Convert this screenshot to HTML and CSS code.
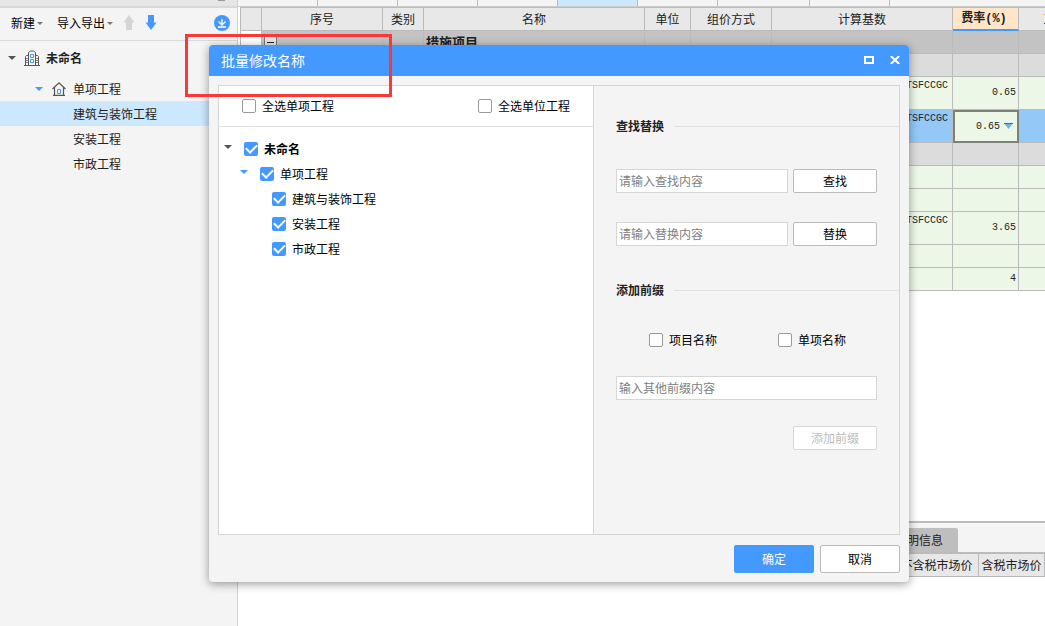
FILE: index.html
```html
<!DOCTYPE html>
<html lang="zh-CN">
<head>
<meta charset="utf-8">
<meta name="viewport" content="width=device-width, initial-scale=1">
<title>批量修改名称</title>
<link rel="stylesheet" href="styles.css">
</head>
<body>
<div class="app">
  <aside class="sidebar">
    <div class="strip strip-side"><i class="strip-nub"></i></div>
    <div class="toolbar">
      <button class="tool">新建<i class="mini-caret"></i></button>
      <button class="tool tool-export">导入导出<i class="mini-caret"></i></button>
      <button class="icon-btn" aria-label="上移" disabled><svg width="12" height="16" viewBox="0 0 12 16"><path d="M6 0l5.500 7.500H9V15H3V7.500H.5z" fill="#d4d4d4"/></svg></button>
      <button class="icon-btn icon-down" aria-label="下移"><svg width="12" height="16" viewBox="0 0 12 16"><path d="M3 0h6v7.500h2.500L6 15 .5 7.500H3z" fill="#49f"/></svg></button>
      <button class="icon-btn icon-load" aria-label="下载"><svg width="16" height="16" viewBox="0 0 16 16"><circle cx="8" cy="8" r="8" fill="#49f"/><path d="M8 4v6M4.500 6.500L8 10l3.500-3.500M4 12h8" fill="none" stroke="#fff" stroke-width="1.300"/></svg></button>
    </div>
    <ul class="nav">
      <li class="nav-row nav-root"><i class="caret"></i>
        <svg class="nav-icon" width="16" height="16" viewBox="0 0 16 16" fill="none" stroke="#555"><path d="M0 15.500h16M1.500 15V6.500l1-1h2M4.500 15V2.500l2-1.500h3l2 1.500V15M11.500 5.500h2l1 1V15"/><path d="M2 8.500h2M2 10.500h2M2 12.500h2M12 8.500h2M12 10.500h2M12 12.500h2" stroke="#888"/><path d="M6.500 4.500h3v3h-3zM6.500 9.500h3v3h-3z" stroke="#49f"/></svg>
        <b>未命名</b></li>
      <li class="nav-row nav-mid"><i class="caret caret-blue"></i>
        <svg class="nav-icon" width="14" height="14" viewBox="0 0 14 14" fill="none" stroke="#555"><path d="M.5 7L7 .9 13.500 7M2.500 5.500v7.500M11.500 5.500v7.500M1 13.400h12" stroke-width="1.200"/><path d="M5.500 7.500h3v4h-3z" stroke="#49f"/></svg>
        <span>单项工程</span></li>
      <li class="nav-row nav-leaf selected">建筑与装饰工程</li>
      <li class="nav-row nav-leaf">安装工程</li>
      <li class="nav-row nav-leaf">市政工程</li>
    </ul>
  </aside>

  <main class="main">
    <div class="strip strip-main"><i></i><i></i><i></i><i></i><i class="on"></i><i></i><i class="wide"></i><i></i></div>
    <div class="sheet">
      <table class="grid">
        <colgroup><col class="c1"><col class="c2"><col class="c3"><col class="c4"><col class="c5"><col class="c6"><col class="c7"><col class="c8"><col class="c9"></colgroup>
        <thead><tr><th></th><th>序号</th><th>类别</th><th>名称</th><th>单位</th><th>组价方式</th><th>计算基数</th><th class="rate">费率(%)</th><th>工程内容</th></tr></thead>
        <tbody>
          <tr class="dark"><td class="blank"></td><td><button class="fold" aria-label="折叠"></button></td><td></td><td class="group">措施项目</td><td></td><td></td><td></td><td></td><td></td></tr>
          <tr class="grey"><td></td><td></td><td></td><td></td><td></td><td></td><td></td><td></td><td></td></tr>
          <tr class="tall"><td></td><td></td><td></td><td></td><td></td><td></td><td class="base">TSFCCGC</td><td class="num">0.65</td><td></td></tr>
          <tr class="tall active"><td></td><td></td><td></td><td></td><td></td><td></td><td class="base">TSFCCGC</td><td class="num edit">0.65<svg class="drop" width="9" height="6" viewBox="0 0 9 6"><path d="M0 0h9L4.500 6z" fill="#6bb4ea"/><path d="M0 .5h9" stroke="#356d9c"/></svg></td><td></td></tr>
          <tr class="grey"><td></td><td></td><td></td><td></td><td></td><td></td><td></td><td></td><td></td></tr>
          <tr><td></td><td></td><td></td><td></td><td></td><td></td><td></td><td></td><td></td></tr>
          <tr><td></td><td></td><td></td><td></td><td></td><td></td><td></td><td></td><td></td></tr>
          <tr class="tall"><td></td><td></td><td></td><td></td><td></td><td></td><td class="base">TSFCCGC</td><td class="num">3.65</td><td></td></tr>
          <tr><td></td><td></td><td></td><td></td><td></td><td></td><td></td><td></td><td></td></tr>
          <tr><td></td><td></td><td></td><td></td><td></td><td></td><td></td><td class="num">4</td><td></td></tr>
        </tbody>
      </table>
    </div>
    <section class="detail">
      <div class="tabs"><button class="tab">说明信息</button></div>
      <table class="detail-grid"><tr><th class="rest"></th><th class="price-a">不含税市场价</th><th class="price-b">含税市场价</th></tr></table>
    </section>
  </main>

  <div class="dialog" role="dialog" aria-labelledby="dlg-title">
    <header class="dlg-head">
      <h1 id="dlg-title">批量修改名称</h1>
      <button class="win" aria-label="最大化"><svg width="10" height="8" viewBox="0 0 10 8"><path d="M1 1h8v6H1z" fill="none" stroke="#fff" stroke-width="2"/></svg></button>
      <button class="win" aria-label="关闭"><svg width="10" height="8" viewBox="0 0 10 8"><path d="M.8 0l8.400 8M9.200 0L.8 8" stroke="#fff" stroke-width="2"/></svg></button>
    </header>
    <div class="dlg-body">
      <div class="pick">
        <div class="pick-all">
          <label class="check"><input type="checkbox">全选单项工程</label>
          <label class="check"><input type="checkbox">全选单位工程</label>
        </div>
        <ul class="tree">
          <li class="lv1"><i class="caret"></i><label class="check"><input type="checkbox" checked><b>未命名</b></label></li>
          <li class="lv2"><i class="caret caret-blue"></i><label class="check"><input type="checkbox" checked>单项工程</label></li>
          <li class="lv3"><label class="check"><input type="checkbox" checked>建筑与装饰工程</label></li>
          <li class="lv3"><label class="check"><input type="checkbox" checked>安装工程</label></li>
          <li class="lv3"><label class="check"><input type="checkbox" checked>市政工程</label></li>
        </ul>
      </div>
      <div class="ops">
        <h2>查找替换</h2>
        <div class="line"><input class="text" type="text" placeholder="请输入查找内容" aria-label="查找内容"><button class="btn">查找</button></div>
        <div class="line"><input class="text" type="text" placeholder="请输入替换内容" aria-label="替换内容"><button class="btn">替换</button></div>
        <h2 class="second">添加前缀</h2>
        <div class="prefixes">
          <label class="check"><input type="checkbox">项目名称</label>
          <label class="check"><input type="checkbox">单项名称</label>
        </div>
        <div class="line other"><input class="text" type="text" placeholder="输入其他前缀内容" aria-label="其他前缀"></div>
        <div class="line add"><button class="btn" disabled>添加前缀</button></div>
      </div>
    </div>
    <footer class="dlg-foot"><button class="btn primary">确定</button><button class="btn">取消</button></footer>
  </div>
  <div class="marker"></div>
</div>
</body>
</html>
```

FILE: styles.css
```css
* { box-sizing: border-box; }
body { margin: 0; font: 12px/16px "Noto Sans CJK SC", sans-serif; color: #222; background: #fff; }
button, input { font: inherit; color: inherit; }
button { padding: 0; border: 0; background: none; }
ul { list-style: none; margin: 0; padding: 0; }
svg { display: block; flex: none; }

.app { position: relative; display: flex; min-height: 100vh; overflow: hidden; }

/* sidebar */
.sidebar { flex: none; width: 238px; background: #f4f4f4; border-right: 1px solid #d2d2d2; }
.strip { height: 7px; border-bottom: 1px solid #ccc; }
.strip-side { height: 8px; background: #e6e6e6; border-bottom: 2px solid #d8d8d8; display: flex; justify-content: flex-end; padding-right: 12px; }
.strip-nub { width: 7px; height: 1px; background: #999; }
.toolbar { display: flex; align-items: center; height: 33px; padding: 0 7px 2px 11px; border-bottom: 1px solid #d9d9d9; }
.tool { display: flex; align-items: center; gap: 2px; color: #000; }
.tool-export { margin-left: 14px; }
.mini-caret { border: 3px solid transparent; border-top-color: #777; border-bottom: 0; }
.icon-btn { margin-left: 10px; }
.icon-load { margin-left: auto; }
.nav { padding-top: 4px; }
.nav-row { display: flex; align-items: center; height: 25px; }
.nav-root { padding-left: 8px; margin-bottom: 6px; }
.nav-root .nav-icon { margin: 0 6px 0 8px; }
.nav-mid { padding-left: 35px; }
.nav-mid .nav-icon { margin: 0 7px 0 9px; }
.nav-leaf { padding-left: 73px; }
.selected { background: #cce8ff; }
.caret { flex: none; border: 4px solid transparent; border-top-color: #555; border-bottom: 0; }
.caret-blue { border-top-color: #49f; }

/* sheet */
.main { flex: 1; min-width: 0; display: flex; flex-direction: column; padding-left: 2px; }
.strip-main { display: flex; background: #f4f4f4; margin-left: -2px; }
.strip-main i { flex: none; width: 80px; border-right: 1px solid #bbb; }
.strip-main .on { background: #cce8ff; }
.strip-main .wide { width: 92px; }
.sheet { flex: 1; overflow: hidden; }
.grid { table-layout: fixed; width: 877px; border-spacing: 0; border-left: 1px solid #bbb; border-top: 1px solid #bbb; }
.c1 { width: 21px; } .c2 { width: 121px; } .c3 { width: 41px; } .c4 { width: 221px; } .c5 { width: 46px; }
.c6 { width: 81px; } .c7 { width: 181px; } .c8 { width: 66px; } .c9 { width: 98px; }
.grid th, .grid td { padding: 0; border-right: 1px solid #bbb; border-bottom: 1px solid #bbb; white-space: nowrap; }
.grid th { height: 23px; background: #e8e8e8; font-weight: 400; }
.grid .rate { background: #ffe6c8; font: 700 12px/16px "Liberation Mono", "Noto Sans CJK SC", monospace; padding-right: 3px; border-bottom: 2px solid #49f; }
.grid td { height: 23px; background: #ecf7e7; line-height: 20px; }
.grid .dark td { background: #c3c3c3; }
.grid .dark .blank { background: #fff; }
.grid .dark .group { padding-left: 2px; font-size: 13px; font-weight: 700; }
.grid .grey td { background: #dcdcdc; }
.grid .tall td { height: 33px; }
.grid .active td { background: #93c8f7; }
.grid .base { vertical-align: top; text-align: right; padding: 0 4px; font: 10px/17px "Liberation Mono", monospace; }
.grid .num { text-align: right; padding-right: 2px; font: 10px/16px "Liberation Mono", monospace; }
.grid .active .edit { background: #ecf7e7; border: 2px solid #7d817a; padding-right: 4px; }
.drop { display: inline-block; margin-left: 4px; }
.fold { display: block; width: 13px; height: 13px; margin-left: 2px; border: 1px solid #777; background: linear-gradient(#222, #222) center / 7px 1px no-repeat #e8e8e8; }

/* detail panel */
.detail { margin-left: -1px; background: #fff; min-height: 105px; border-top: 2px solid #bbb; }
.tabs { display: flex; justify-content: flex-end; padding: 5px 87px 0 0; background: #f4f4f4; border-bottom: 2px solid #bbb; }
.tab { width: 78px; height: 24px; background: #bebebe; border-radius: 0 2px 0 0; }
.detail-grid { table-layout: fixed; width: 100%; border-spacing: 0; }
.detail-grid th { height: 23px; padding: 0; background: #e8e8e8; border-right: 1px solid #bbb; border-bottom: 1px solid #bbb; font-weight: 400; white-space: nowrap; }
.price-a { width: 84px; }
.price-b { width: 66px; }

/* dialog */
.dialog { position: absolute; left: 209px; top: 45px; width: 700px; background: #f4f4f4; border-radius: 4px; box-shadow: 0 2px 10px rgba(0, 0, 0, .4); color: #000; }
.dlg-head { display: flex; align-items: center; gap: 16px; height: 31px; padding: 0 9px 1px 12px; background: #49f; border-radius: 4px 4px 0 0; color: #fff; }
.dlg-head h1 { flex: 1; margin: 0; font-size: 14px; font-weight: 400; line-height: 20px; }
.dlg-body { display: flex; min-height: 450px; margin: 9px 9px 0; border: 1px solid #d6d6d6; }
.pick { flex: 1; background: #fff; border-right: 1px solid #d6d6d6; }
.pick-all { display: flex; gap: 144px; height: 41px; padding-left: 23px; border-bottom: 1px solid #e2e2e2; }
.check { display: inline-flex; align-items: center; gap: 6px; white-space: nowrap; }
.check input { appearance: none; flex: none; width: 14px; height: 14px; margin: 0; border: 1px solid #999; border-radius: 2px; background: #fff; }
.check input:checked { border: 0; background: #49f; display: grid; place-items: center; }
.check input:checked::after { content: ""; width: 9px; height: 5px; margin-bottom: 2px; border: 2px solid #fff; border-top: 0; border-right: 0; transform: rotate(-45deg); }
.tree { padding-top: 9px; }
.tree li { display: flex; align-items: center; height: 25px; }
.tree .caret { margin: 0 12px 4px 0; }
.lv1 { padding-left: 5px; }
.lv2 { padding-left: 21px; }
.lv3 { padding-left: 53px; }
.ops { flex: none; width: 305px; padding: 32px 0 0 22px; }
.ops h2 { display: flex; align-items: center; gap: 10px; margin: 0; font-size: 12px; line-height: 16px; color: #222; }
.ops h2::after { content: ""; flex: 1; height: 1px; background: #e0e0e0; }
.line { display: flex; gap: 5px; padding-right: 22px; margin-top: 29px; }
.ops h2 + .line { margin-top: 35px; }
.ops .second { margin-top: 36px; }
.text { flex: 1; min-width: 0; height: 24px; padding: 0 2px 1px; border: 1px solid #d6d6d6; background: #fff; }
.text::placeholder { color: #808080; opacity: 1; }
.btn { width: 84px; height: 24px; border: 1px solid #bbb; border-radius: 2px; background: #fff; }
.btn:disabled { color: #bbb; border-color: #d6d6d6; }
.prefixes { display: flex; gap: 61px; padding-left: 33px; margin-top: 34px; }
.line.other { margin-top: 28px; }
.line.add { justify-content: flex-end; margin-top: 26px; }
.dlg-foot { display: flex; justify-content: flex-end; gap: 6px; padding: 10px 9px 9px; }
.dlg-foot .btn { width: 80px; height: 28px; }
.dlg-foot .primary { background: #49f; border-color: #49f; color: #fff; }

/* highlight frame */
.marker { position: absolute; left: 185px; top: 34px; width: 207px; height: 63px; border: 3px solid #fb3838; pointer-events: none; }
```
